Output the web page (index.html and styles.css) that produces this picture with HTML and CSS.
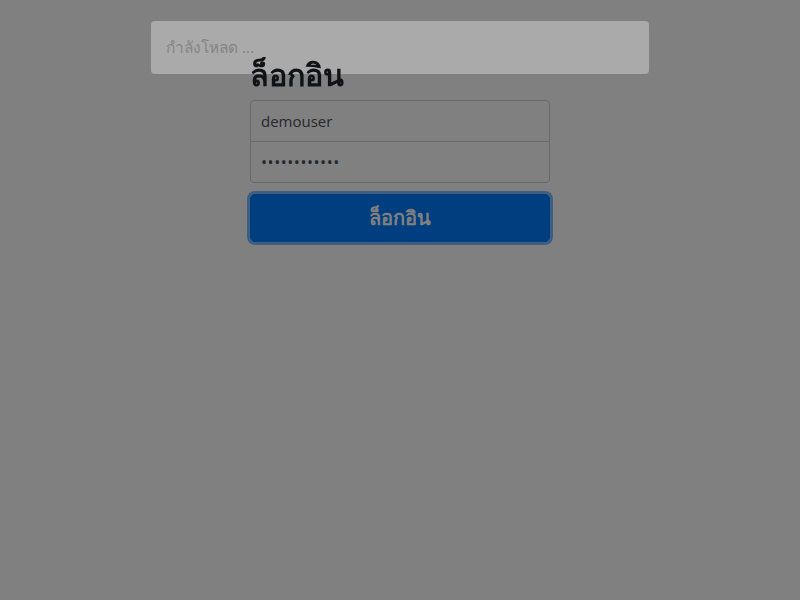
FILE: index.html
```html
<!DOCTYPE html>
<html lang="th">
<head>
<meta charset="utf-8">
<title>ล็อกอิน</title>
<link rel="stylesheet" href="styles.css">
</head>
<body>
<form class="form-signin">
  <h2 class="form-signin-heading">ล็อกอิน</h2>
  <input class="form-control input-user" type="text" value="demouser">
  <input class="form-control input-pass" type="password" value="demopassword">
  <button class="btn-login" type="button">ล็อกอิน</button>
</form>
<div class="loading-box">กำลังโหลด ...</div>
</body>
</html>
```
FILE: styles.css
```css
html, body {
  margin: 0;
  height: 100%;
}
body {
  background: #808080;
  font-family: "Open Sans", sans-serif;
  color: #101215;
  padding-top: 41px;
  box-sizing: border-box;
}
.form-signin {
  width: 300px;
  margin: 0 auto;
  padding: 15px 0;
  display: flex;
  flex-direction: column;
}
.form-signin-heading {
  position: relative;
  z-index: 2;
  margin: 0 0 8px;
  height: 36px;
  font-size: 30.5px;
  font-weight: 700;
  line-height: 36px;
  color: #101215;
}
.form-control {
  box-sizing: border-box;
  display: block;
  width: 100%;
  height: 42px;
  padding: 8px 10px;
  font-family: "Open Sans", sans-serif;
  font-size: 15px;
  line-height: 24px;
  color: #25282c;
  background: #808080;
  border: 1px solid #676a6d;
  border-radius: 4px;
  outline: none;
}
.input-user {
  margin-bottom: -1px;
  border-bottom-left-radius: 0;
  border-bottom-right-radius: 0;
}
.input-pass {
  letter-spacing: 0.55px;
  font-size: 16px;
  border-top-left-radius: 0;
  border-top-right-radius: 0;
}
.btn-login {
  margin-top: 11px;
  box-sizing: border-box;
  width: 100%;
  height: 48px;
  padding: 8px 16px;
  font-family: "Open Sans", sans-serif;
  font-size: 20px;
  font-weight: 600;
  line-height: 30px;
  color: #808080;
  background: #003e80;
  border: 1px solid #003e80;
  border-radius: 5px;
  box-shadow: 0 0 0 3px #405e80;
}
.loading-box {
  position: fixed;
  top: 21px;
  left: 50%;
  margin-left: -249px;
  width: 498px;
  height: 53px;
  box-sizing: border-box;
  padding: 0 15px;
  display: flex;
  align-items: center;
  background: #aaaaaa;
  border-radius: 4px;
  color: #858585;
  font-size: 15.5px;
  z-index: 1;
}
```
